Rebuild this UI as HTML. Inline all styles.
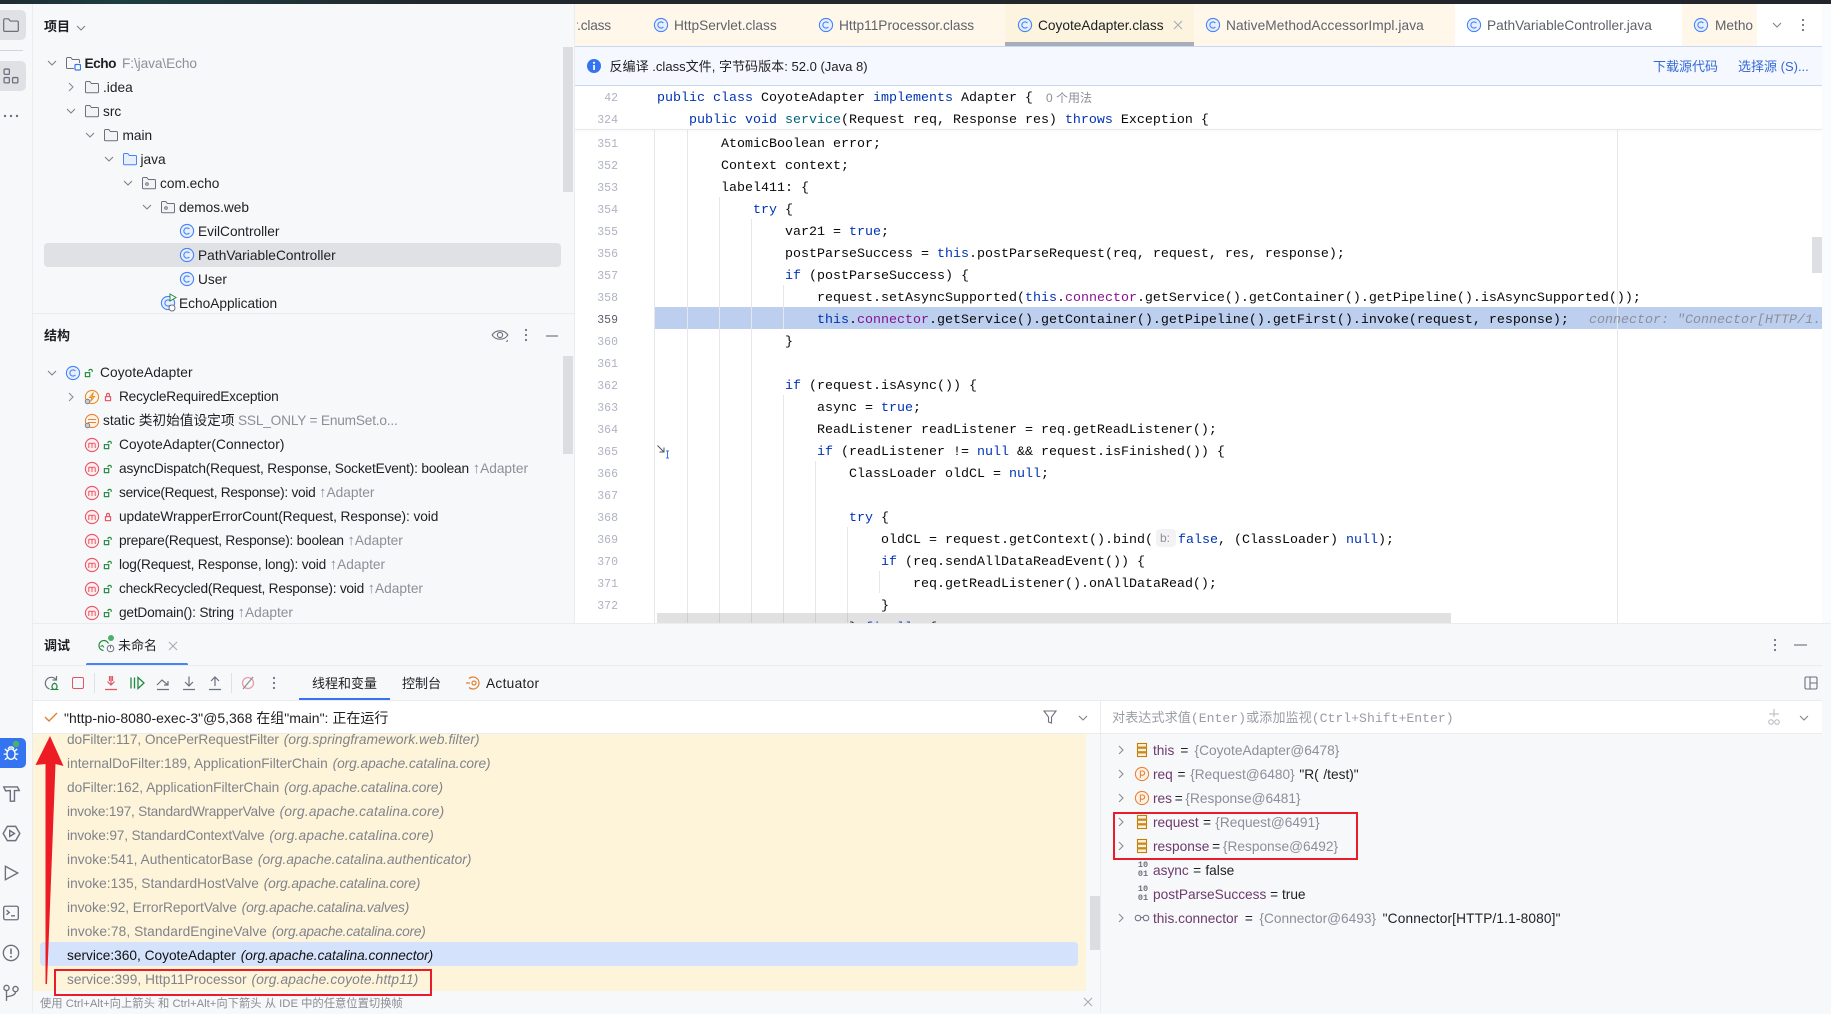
<!DOCTYPE html>
<html lang="zh">
<head>
<meta charset="utf-8">
<title>IDE Debug</title>
<style>
*{box-sizing:border-box}
html,body{margin:0;padding:0}
body{width:1831px;height:1012px;overflow:hidden;background:#f7f8fa;position:relative;font-family:"Liberation Sans","Noto Sans CJK SC",sans-serif;font-size:13.7px;color:#1e1f22}
.b{position:absolute}
.t{position:absolute;white-space:pre;line-height:20px;height:20px;margin-top:1px}
.g{color:#8c8f99;letter-spacing:0}
.g b{font-weight:normal;font-size:15px;line-height:10px}
.i{position:absolute;width:16px;height:16px;overflow:visible;margin-top:1px}
.c{position:absolute;white-space:pre;line-height:20px;height:20px;font-family:"Liberation Mono",monospace;font-size:13.33px;color:#080808;margin-top:4px}
.n{position:absolute;left:570px;width:48px;text-align:right;line-height:20px;height:20px;font-family:"Liberation Mono",monospace;font-size:11.5px;color:#aeb3c2;margin-top:4px}
.k{color:#0033b3}.f{color:#871094}.m{color:#00627a}
.tab{color:#5f626b}
.st{position:absolute;left:34px;white-space:pre;line-height:20px;height:20px;color:#80838a;margin-top:2px}
.st i{margin-left:1px}
.v{color:#6d3a6a}
.vg{color:#8c8f99}
.gl{position:absolute;width:1px;background:#e6e7eb}
.bi{position:absolute;left:1137px;width:12px;font:bold 8.5px/9px "Liberation Mono",monospace;color:#6c707e;text-align:center}
</style>
</head>
<body>
<svg width="0" height="0" style="position:absolute">
<defs>
<symbol id="c" viewBox="0 0 16 16"><circle cx="8" cy="8" r="6.6" fill="#e7effd" stroke="#4682fa" stroke-width="1.1"/><path d="M10.4 6.1A3.1 3.1 0 1 0 10.4 9.9" fill="none" stroke="#4682fa" stroke-width="1.1"/></symbol>
<symbol id="m" viewBox="0 0 16 16"><circle cx="8" cy="8" r="6.6" fill="#fdeef0" stroke="#e55765" stroke-width="1.1"/><path d="M4.8 11V6M4.8 7c.5-1.1 2.6-1.1 3.2 0v4M8 7c.5-1.1 2.6-1.1 3.2 0v4" fill="none" stroke="#e55765" stroke-width="1"/></symbol>
<symbol id="p" viewBox="0 0 16 16"><circle cx="8" cy="8" r="6.6" fill="#fff3e8" stroke="#e8833a" stroke-width="1.1"/><path d="M6.4 12V5h2.2a2.1 2.1 0 0 1 0 4.2H6.4" fill="none" stroke="#e8833a" stroke-width="1.1"/></symbol>
<symbol id="fd" viewBox="0 0 16 16"><path d="M1.5 3.5a1 1 0 0 1 1-1h3.3l1.6 2h6.1a1 1 0 0 1 1 1v7.2a1 1 0 0 1-1 1h-11a1 1 0 0 1-1-1z" fill="#f2f3f5" stroke="#6c707e" stroke-width="1"/></symbol>
<symbol id="fj" viewBox="0 0 16 16"><path d="M1.5 3.5a1 1 0 0 1 1-1h3.3l1.6 2h6.1a1 1 0 0 1 1 1v7.2a1 1 0 0 1-1 1h-11a1 1 0 0 1-1-1z" fill="#e7effd" stroke="#4682fa" stroke-width="1"/></symbol>
<symbol id="fp" viewBox="0 0 16 16"><path d="M1.5 3.5a1 1 0 0 1 1-1h3.3l1.6 2h6.1a1 1 0 0 1 1 1v7.2a1 1 0 0 1-1 1h-11a1 1 0 0 1-1-1z" fill="#f2f3f5" stroke="#6c707e" stroke-width="1"/><circle cx="6" cy="9" r="1.3" fill="none" stroke="#6c707e"/></symbol>
<symbol id="fm" viewBox="0 0 16 16"><path d="M9 13.5H2.5a1 1 0 0 1-1-1v-9a1 1 0 0 1 1-1h3.3l1.6 2h6.1a1 1 0 0 1 1 1V8" fill="#f7f8fa" stroke="#6c707e" stroke-width="1"/><rect x="10" y="9.5" width="5.5" height="5.5" rx="1" fill="#fff" stroke="#3574f0" stroke-width="1.2"/></symbol>
<symbol id="dn" viewBox="0 0 16 16"><path d="M4 6l4 4 4-4" fill="none" stroke="#7f8289" stroke-width="1.1"/></symbol>
<symbol id="rt" viewBox="0 0 16 16"><path d="M6 4l4 4-4 4" fill="none" stroke="#8a8d94" stroke-width="1.1"/></symbol>
<symbol id="lo" viewBox="-3 -3 22 22"><rect x="3" y="7.5" width="6" height="5.5" fill="none" stroke="#208a3c" stroke-width="1.6"/><path d="M8 5.5V4.5a2.3 2.3 0 0 1 4.4 0V6.5" fill="none" stroke="#208a3c" stroke-width="1.6"/></symbol>
<symbol id="lc" viewBox="-3 -3 22 22"><rect x="4.5" y="7.5" width="7" height="5.5" fill="none" stroke="#e55765" stroke-width="1.6"/><path d="M6 7.5V5a2 2 0 0 1 4 0v2.5" fill="none" stroke="#e55765" stroke-width="1.6"/></symbol>
<symbol id="fs" viewBox="0 0 16 16"><g fill="#fdf3dc" stroke="#c47e08" stroke-width="1.1"><rect x="3.5" y="1.5" width="9" height="3.6"/><rect x="3.5" y="6.2" width="9" height="3.6"/><rect x="3.5" y="10.9" width="9" height="3.6"/></g></symbol>
<symbol id="x" viewBox="0 0 16 16"><path d="M4 4l8 8M12 4l-8 8" stroke="#a8abb3" stroke-width="1.1" fill="none"/></symbol>
<symbol id="ke" viewBox="0 0 16 16"><g fill="#6c707e"><circle cx="8" cy="3" r="1.1"/><circle cx="8" cy="8" r="1.1"/><circle cx="8" cy="13" r="1.1"/></g></symbol>
</defs>
</svg>

<!-- top strip -->
<div class="b" style="left:0;top:0;width:1831px;height:4px;background:linear-gradient(90deg,#1f2b30 0,#1d3f3f 120px,#21282d 420px,#22252b 100%)"></div>

<!-- left toolbar -->
<div class="b" style="left:32px;top:4px;width:1px;height:1008px;background:#ebecf0"></div>
<div class="b" style="left:0;top:10px;width:26px;height:30px;background:#dfe1e5;border-radius:0 5px 5px 0"></div>
<svg class="i" style="left:2px;top:15px;width:18px;height:18px" viewBox="0 0 16 16"><path d="M1.5 3.5a1 1 0 0 1 1-1h3.3l1.6 2h6.1a1 1 0 0 1 1 1v7.2a1 1 0 0 1-1 1h-11a1 1 0 0 1-1-1z" fill="none" stroke="#6c707e" stroke-width="1.1"/></svg>
<div class="b" style="left:0;top:50px;width:23px;height:1px;background:#d3d5db"></div>
<div class="b" style="left:0;top:61px;width:26px;height:30px;background:#dfe1e5;border-radius:0 5px 5px 0"></div>
<svg class="i" style="left:3px;top:67px;width:17px;height:17px" viewBox="0 0 16 16"><g fill="none" stroke="#6c707e" stroke-width="1.2"><rect x="1" y="1" width="5" height="5" rx="1"/><rect x="1" y="9" width="5" height="5" rx="1"/><rect x="9" y="9" width="5" height="5" rx="1"/></g></svg>
<svg class="i" style="left:3px;top:107px" viewBox="0 0 16 16"><g fill="#6c707e"><circle cx="2" cy="8" r="1.2"/><circle cx="8" cy="8" r="1.2"/><circle cx="14" cy="8" r="1.2"/></g></svg>

<div class="b" style="left:0;top:738px;width:26px;height:30px;background:#3574f0;border-radius:0 5px 5px 0"></div>
<svg class="i" style="left:2px;top:743px;width:18px;height:18px" viewBox="0 0 16 16"><g fill="none" stroke="#fff" stroke-width="1.2"><ellipse cx="8" cy="9" rx="3.6" ry="4.6"/><path d="M5.5 4.5a2.6 2.6 0 0 1 5 0M1.5 9h3M11.5 9h3M2.5 4.5l2.5 2M13.5 4.5l-2.500 2M2.5 14l2.5-2M13.5 14l-2.5-2"/></g></svg>
<svg class="i" style="left:12px;top:739px;width:8px;height:8px" viewBox="0 0 8 8"><circle cx="4" cy="4" r="3.2" fill="#4caf6a"/></svg>
<svg class="i" style="left:2px;top:783px;width:19px;height:19px" viewBox="0 0 16 16"><path d="M1.5 2.5H13l1.5 3H10.5V14.5H7V5.5L3 5.8z" fill="none" stroke="#6c707e" stroke-width="1.2"/></svg>
<svg class="i" style="left:2px;top:823px;width:19px;height:19px" viewBox="0 0 16 16"><path d="M4.5 2h7l3.5 6-3.5 6h-7L1 8z" fill="none" stroke="#6c707e" stroke-width="1.2"/><path d="M6.5 5.500l4 2.500-4 2.500z" fill="none" stroke="#6c707e" stroke-width="1.2"/></svg>
<svg class="i" style="left:2px;top:863px;width:18px;height:18px" viewBox="0 0 16 16"><path d="M3 2l11 6-11 6z" fill="none" stroke="#6c707e" stroke-width="1.2"/></svg>
<svg class="i" style="left:2px;top:903px;width:18px;height:18px" viewBox="0 0 16 16"><rect x="1.5" y="2" width="13" height="12" rx="1.5" fill="none" stroke="#6c707e" stroke-width="1.2"/><path d="M4 5.5l2.500 2L4 9.500M8 10.500h3.500" fill="none" stroke="#6c707e" stroke-width="1.2"/></svg>
<svg class="i" style="left:2px;top:943px;width:18px;height:18px" viewBox="0 0 16 16"><circle cx="8" cy="8" r="6.8" fill="none" stroke="#6c707e" stroke-width="1.2"/><path d="M8 4v5" stroke="#6c707e" stroke-width="1.4"/><circle cx="8" cy="11.3" r=".9" fill="#6c707e"/></svg>
<svg class="i" style="left:2px;top:983px;width:18px;height:18px" viewBox="0 0 16 16"><g fill="none" stroke="#6c707e" stroke-width="1.2"><circle cx="4" cy="3.5" r="2.3"/><circle cx="12" cy="4.5" r="2.3"/><path d="M4 6v9M12 7c0 3-4 3.5-8 4.500"/></g></svg>

<!-- project panel -->
<div class="t" style="left:44px;top:16px;font-weight:bold;font-size:13px">项目</div>
<svg class="i" style="left:73px;top:19px"><use href="#dn"/></svg>
<div class="b" style="left:563px;top:47px;width:10px;height:145px;background:#dcdde0"></div>
<div class="b" style="left:44px;top:243px;width:517px;height:24px;background:#dfe1e5;border-radius:4px"></div>

<svg class="i" style="left:44px;top:54px"><use href="#dn"/></svg>
<svg class="i" style="left:65px;top:54px"><use href="#fm"/></svg>
<div class="t" style="left:84.5px;top:53px;font-weight:bold;letter-spacing:-.5px">Echo</div>
<div class="t g" style="left:122px;top:53px;letter-spacing:-.1px">F:\java\Echo</div>

<svg class="i" style="left:63px;top:78px"><use href="#rt"/></svg>
<svg class="i" style="left:84px;top:78px"><use href="#fd"/></svg>
<div class="t" style="left:103px;top:77px">.idea</div>

<svg class="i" style="left:63px;top:102px"><use href="#dn"/></svg>
<svg class="i" style="left:84px;top:102px"><use href="#fd"/></svg>
<div class="t" style="left:103px;top:101px">src</div>

<svg class="i" style="left:82px;top:126px"><use href="#dn"/></svg>
<svg class="i" style="left:103px;top:126px"><use href="#fd"/></svg>
<div class="t" style="left:122.5px;top:125px">main</div>

<svg class="i" style="left:101px;top:150px"><use href="#dn"/></svg>
<svg class="i" style="left:122px;top:150px"><use href="#fj"/></svg>
<div class="t" style="left:140.5px;top:149px">java</div>

<svg class="i" style="left:120px;top:174px"><use href="#dn"/></svg>
<svg class="i" style="left:141px;top:174px"><use href="#fp"/></svg>
<div class="t" style="left:160px;top:173px">com.echo</div>

<svg class="i" style="left:139px;top:198px"><use href="#dn"/></svg>
<svg class="i" style="left:160px;top:198px"><use href="#fp"/></svg>
<div class="t" style="left:179px;top:197px">demos.web</div>

<svg class="i" style="left:179px;top:222px"><use href="#c"/></svg>
<div class="t" style="left:198px;top:221px">EvilController</div>
<svg class="i" style="left:179px;top:246px"><use href="#c"/></svg>
<div class="t" style="left:198px;top:245px;letter-spacing:.05px">PathVariableController</div>
<svg class="i" style="left:179px;top:270px"><use href="#c"/></svg>
<div class="t" style="left:198px;top:269px">User</div>
<svg class="i" style="left:160px;top:294px"><use href="#c"/></svg>
<svg class="i" style="left:169px;top:292px;width:9px;height:9px" viewBox="0 0 9 9"><path d="M1 1l6 3.5-6 3.5z" fill="#fff" stroke="#208a3c"/></svg>
<svg class="i" style="left:168px;top:303px;width:8px;height:8px" viewBox="0 0 8 8"><circle cx="4" cy="4" r="3" fill="#fff" stroke="#6c707e"/></svg>
<div class="t" style="left:179px;top:293px">EchoApplication</div>

<div class="b" style="left:32px;top:313px;width:542px;height:1px;background:#ebecf0"></div>

<!-- structure panel -->
<div class="t" style="left:44px;top:325px;font-weight:bold;font-size:13px">结构</div>
<svg class="i" style="left:491px;top:325px;width:18px;height:18px" viewBox="0 0 16 16"><path d="M1 8c3-5 11-5 14 0-3 5-11 5-14 0z" fill="none" stroke="#6c707e"/><circle cx="8" cy="8" r="2.3" fill="none" stroke="#6c707e"/><path d="M13 14h2v-2z" fill="#6c707e"/></svg>
<svg class="i" style="left:518px;top:326px"><use href="#ke"/></svg>
<div class="b" style="left:546px;top:335px;width:12px;height:1.5px;background:#a8abb3"></div>
<div class="b" style="left:563px;top:356px;width:10px;height:98px;background:#dcdde0"></div>

<div class="b" style="left:0;top:1px;width:0;height:0">
<svg class="i" style="left:44px;top:363px"><use href="#dn"/></svg>
<svg class="i" style="left:65px;top:363px"><use href="#c"/></svg>
<svg class="i" style="left:81px;top:363px"><use href="#lo"/></svg>
<div class="t" style="left:100px;top:361px;letter-spacing:.1px">CoyoteAdapter</div>

<svg class="i" style="left:63px;top:387px"><use href="#rt"/></svg>
<svg class="i" style="left:84px;top:387px" viewBox="0 0 16 16"><circle cx="8" cy="8" r="6.6" fill="#fff3e8" stroke="#e0912f" stroke-width="1.1"/><path d="M9.5 3.5L5.5 8.5H8L6.5 12.5l4-5H8z" fill="none" stroke="#e0912f"/><circle cx="3.5" cy="12.5" r="2.3" fill="#c9ccd6" stroke="#6c707e" stroke-width=".8"/></svg>
<svg class="i" style="left:100px;top:387px"><use href="#lc"/></svg>
<div class="t" style="left:119px;top:385px;letter-spacing:-.2px">RecycleRequiredException</div>

<svg class="i" style="left:84px;top:411px" viewBox="0 0 16 16"><circle cx="8" cy="8" r="6.6" fill="#fff3e8" stroke="#e8833a" stroke-width="1.1"/><path d="M4 6.5h8M4 9.5h8" stroke="#e8833a"/><circle cx="3.5" cy="12.5" r="2.3" fill="#c9ccd6" stroke="#6c707e" stroke-width=".8"/></svg>
<div class="t" style="left:103px;top:409px">static 类初始值设定项</div>
<div class="t g" style="left:238px;top:409px;letter-spacing:-.2px">SSL_ONLY = EnumSet.o...</div>

<svg class="i" style="left:84px;top:435px"><use href="#m"/></svg>
<svg class="i" style="left:100px;top:435px"><use href="#lo"/></svg>
<div class="t" style="left:119px;top:433px;letter-spacing:.08px">CoyoteAdapter(Connector)</div>

<svg class="i" style="left:84px;top:459px"><use href="#m"/></svg>
<svg class="i" style="left:100px;top:459px"><use href="#lo"/></svg>
<div class="t" style="left:119px;top:457px;letter-spacing:-.17px">asyncDispatch(Request, Response, SocketEvent): boolean <span class="g"><b>↑</b>Adapter</span></div>

<svg class="i" style="left:84px;top:483px"><use href="#m"/></svg>
<svg class="i" style="left:100px;top:483px"><use href="#lo"/></svg>
<div class="t" style="left:119px;top:481px;letter-spacing:-.28px">service(Request, Response): void <span class="g"><b>↑</b>Adapter</span></div>

<svg class="i" style="left:84px;top:507px"><use href="#m"/></svg>
<svg class="i" style="left:100px;top:507px"><use href="#lc"/></svg>
<div class="t" style="left:119px;top:505px;letter-spacing:-.08px">updateWrapperErrorCount(Request, Response): void</div>

<svg class="i" style="left:84px;top:531px"><use href="#m"/></svg>
<svg class="i" style="left:100px;top:531px"><use href="#lo"/></svg>
<div class="t" style="left:119px;top:529px;letter-spacing:-.23px">prepare(Request, Response): boolean <span class="g"><b>↑</b>Adapter</span></div>

<svg class="i" style="left:84px;top:555px"><use href="#m"/></svg>
<svg class="i" style="left:100px;top:555px"><use href="#lo"/></svg>
<div class="t" style="left:119px;top:553px;letter-spacing:-.2px">log(Request, Response, long): void <span class="g"><b>↑</b>Adapter</span></div>

<svg class="i" style="left:84px;top:579px"><use href="#m"/></svg>
<svg class="i" style="left:100px;top:579px"><use href="#lo"/></svg>
<div class="t" style="left:119px;top:577px;letter-spacing:-.24px">checkRecycled(Request, Response): void <span class="g"><b>↑</b>Adapter</span></div>

<svg class="i" style="left:84px;top:603px"><use href="#m"/></svg>
<svg class="i" style="left:100px;top:603px"><use href="#lo"/></svg>
<div class="t" style="left:119px;top:601px;letter-spacing:-.2px">getDomain(): String <span class="g"><b>↑</b>Adapter</span></div>
</div>

<!-- editor -->
<div class="b" style="left:574px;top:4px;width:1248px;height:620px;background:#fff;overflow:hidden"></div>
<div class="b" style="left:574px;top:4px;width:1px;height:619px;background:#ebecf0"></div>
<div class="b" style="left:1822px;top:4px;width:9px;height:619px;background:#fafbfc"></div>

<!-- tabs -->
<div class="b" style="left:575px;top:4px;width:880px;height:42px;background:#fff8ea"></div>
<div class="b" style="left:1682px;top:4px;width:75px;height:42px;background:#fff8ea"></div>
<div class="b" style="left:1005px;top:4px;width:189px;height:38px;background:#fdf4e0"></div>
<div class="b" style="left:1005px;top:42px;width:189px;height:4px;background:#a9adbb"></div>
<div class="b" style="left:575px;top:46px;width:1247px;height:1px;background:#c9d7f1"></div>
<div class="b" style="left:577px;top:15px;width:40px;height:22px;overflow:hidden"><div class="t tab" style="left:-3.5px;top:0;letter-spacing:-.2px">r.class</div></div>
<svg class="i" style="left:653px;top:16px"><use href="#c"/></svg>
<div class="t tab" style="left:674px;top:15px">HttpServlet.class</div>
<svg class="i" style="left:818px;top:16px"><use href="#c"/></svg>
<div class="t tab" style="left:839px;top:15px">Http11Processor.class</div>
<svg class="i" style="left:1017px;top:16px"><use href="#c"/></svg>
<div class="t" style="left:1038px;top:15px">CoyoteAdapter.class</div>
<svg class="i" style="left:1170px;top:16px"><use href="#x"/></svg>
<svg class="i" style="left:1205px;top:16px"><use href="#c"/></svg>
<div class="t tab" style="left:1226px;top:15px;letter-spacing:.08px">NativeMethodAccessorImpl.java</div>
<svg class="i" style="left:1466px;top:16px"><use href="#c"/></svg>
<div class="t tab" style="left:1487px;top:15px">PathVariableController.java</div>
<svg class="i" style="left:1693px;top:16px"><use href="#c"/></svg>
<div class="b" style="left:1715px;top:15px;width:38px;height:22px;overflow:hidden"><div class="t tab" style="left:0;top:0">MethodHandle</div></div>
<svg class="i" style="left:1769px;top:16px"><use href="#dn"/></svg>
<svg class="i" style="left:1795px;top:16px"><use href="#ke"/></svg>

<!-- banner -->
<div class="b" style="left:575px;top:47px;width:1247px;height:39px;background:#f5f8fe;border-bottom:1px solid #c9d7f1"></div>
<svg class="i" style="left:586px;top:57px" viewBox="0 0 16 16"><circle cx="8" cy="8" r="7" fill="#3574f0"/><rect x="7.2" y="7" width="1.7" height="5" fill="#fff"/><circle cx="8" cy="4.8" r="1.1" fill="#fff"/></svg>
<div class="t" style="left:609.5px;top:56px;font-size:13.05px">反编译 .class文件, 字节码版本: 52.0 (Java 8)</div>
<div class="t" style="left:1653px;top:56px;color:#3369d6;font-size:13px">下载源代码</div>
<div class="t" style="left:1738px;top:56px;color:#3369d6;font-size:13px">选择源 (S)...</div>

<!-- code wrap -->
<div class="b" style="left:0;top:0;width:1822px;height:623px;overflow:hidden">
  <div class="b" style="left:654px;top:307px;width:1168px;height:22px;background:#bdcfef"></div>
  <div class="gl" style="left:654px;top:130px;height:493px"></div>
  <div class="gl" style="left:687px;top:130px;height:493px"></div>
  <div class="gl" style="left:719px;top:197px;height:426px"></div>
  <div class="gl" style="left:751px;top:219px;height:404px"></div>
  <div class="gl" style="left:783px;top:285px;height:44px"></div>
  <div class="gl" style="left:783px;top:395px;height:228px"></div>
  <div class="gl" style="left:815px;top:461px;height:162px"></div>
  <div class="gl" style="left:847px;top:527px;height:96px"></div>
  <div class="gl" style="left:879px;top:571px;height:22px"></div>
  <div class="gl" style="left:1617px;top:130px;height:493px"></div>

  <div class="n" style="top:85px">42</div>
  <div class="c" style="left:657px;top:85px"><span class="k">public class</span> CoyoteAdapter <span class="k">implements</span> Adapter {</div>
  <div class="t" style="left:1046px;top:87px;color:#8c8f99;font-size:12px">0 个用法</div>
  <div class="n" style="top:107px">324</div>
  <div class="c" style="left:689px;top:107px"><span class="k">public void</span> <span class="m">service</span>(Request req, Response res) <span class="k">throws</span> Exception {</div>
  <div class="b" style="left:575px;top:129px;width:1247px;height:1px;background:#e8e9ec;box-shadow:0 1px 3px rgba(0,0,0,.06)"></div>

  <div class="n" style="top:131px">351</div><div class="c" style="left:721px;top:131px">AtomicBoolean error;</div>
  <div class="n" style="top:153px">352</div><div class="c" style="left:721px;top:153px">Context context;</div>
  <div class="n" style="top:175px">353</div><div class="c" style="left:721px;top:175px">label411: {</div>
  <div class="n" style="top:197px">354</div><div class="c" style="left:753px;top:197px"><span class="k">try</span> {</div>
  <div class="n" style="top:219px">355</div><div class="c" style="left:785px;top:219px">var21 = <span class="k">true</span>;</div>
  <div class="n" style="top:241px">356</div><div class="c" style="left:785px;top:241px">postParseSuccess = <span class="k">this</span>.postParseRequest(req, request, res, response);</div>
  <div class="n" style="top:263px">357</div><div class="c" style="left:785px;top:263px"><span class="k">if</span> (postParseSuccess) {</div>
  <div class="n" style="top:285px">358</div><div class="c" style="left:817px;top:285px">request.setAsyncSupported(<span class="k">this</span>.<span class="f">connector</span>.getService().getContainer().getPipeline().isAsyncSupported());</div>
  <div class="n" style="top:307px;color:#5a5d6b">359</div><div class="c" style="left:817px;top:307px"><span class="k">this</span>.<span class="f">connector</span>.getService().getContainer().getPipeline().getFirst().invoke(request, response);</div>
  <div class="c" style="left:1589px;top:307px;color:#8c8f99;font-style:italic">connector: "Connector[HTTP/1.1-8080]"</div>
  <div class="n" style="top:329px">360</div><div class="c" style="left:785px;top:329px">}</div>
  <div class="n" style="top:351px">361</div>
  <div class="n" style="top:373px">362</div><div class="c" style="left:785px;top:373px"><span class="k">if</span> (request.isAsync()) {</div>
  <div class="n" style="top:395px">363</div><div class="c" style="left:817px;top:395px">async = <span class="k">true</span>;</div>
  <div class="n" style="top:417px">364</div><div class="c" style="left:817px;top:417px">ReadListener readListener = req.getReadListener();</div>
  <div class="n" style="top:439px">365</div><div class="c" style="left:817px;top:439px"><span class="k">if</span> (readListener != <span class="k">null</span> &amp;&amp; request.isFinished()) {</div>
  <div class="n" style="top:461px">366</div><div class="c" style="left:849px;top:461px">ClassLoader oldCL = <span class="k">null</span>;</div>
  <div class="n" style="top:483px">367</div>
  <div class="n" style="top:505px">368</div><div class="c" style="left:849px;top:505px"><span class="k">try</span> {</div>
  <div class="n" style="top:527px">369</div><div class="c" style="left:881px;top:527px">oldCL = request.getContext().bind(</div>
  <div class="b" style="left:1156px;top:529px;width:20px;height:18px;background:#f3f3f4;border-radius:4px"></div>
  <div class="t" style="left:1160px;top:527px;color:#8c8f99;font-size:12px">b:</div>
  <div class="c" style="left:1178px;top:527px"><span class="k">false</span>, (ClassLoader) <span class="k">null</span>);</div>
  <div class="n" style="top:549px">370</div><div class="c" style="left:881px;top:549px"><span class="k">if</span> (req.sendAllDataReadEvent()) {</div>
  <div class="n" style="top:571px">371</div><div class="c" style="left:913px;top:571px">req.getReadListener().onAllDataRead();</div>
  <div class="n" style="top:593px">372</div><div class="c" style="left:881px;top:593px">}</div>
  <div class="n" style="top:615px">373</div><div class="c" style="left:849px;top:615px">} <span class="k">finally</span> {</div>

  <svg class="i" style="left:656px;top:443px" viewBox="0 0 16 16"><path d="M1.5 1.5l6.5 6.5M8 3.5V8H3.5" fill="none" stroke="#4d5563"/><path d="M10 7h3M11.5 7v7M10 14h3" fill="none" stroke="#3574f0"/></svg>

  <div class="b" style="left:657px;top:613px;width:794px;height:10px;background:rgba(120,120,120,.22)"></div>
  <div class="b" style="left:1812px;top:237px;width:10px;height:36px;background:#dedfe2"></div>
</div>

<!-- debug panel -->
<div class="b" style="left:32px;top:623px;width:1799px;height:1px;background:#ebecf0"></div>
<div class="t" style="left:44px;top:635px;font-weight:bold;font-size:13px">调试</div>
<svg class="i" style="left:99px;top:636px" viewBox="0 0 16 16"><path d="M9.5 6.5a5 5 0 1 0-5 7" fill="none" stroke="#208a3c" stroke-width="1.2"/><path d="M1.5 9.5l2-1 1.5 2" fill="none" stroke="#208a3c"/><circle cx="11.5" cy="11.5" r="3.3" fill="#f7f8fa" stroke="#6c707e"/><path d="M11.5 9v2.5" stroke="#6c707e"/></svg>
<svg class="i" style="left:107px;top:633px;width:8px;height:8px" viewBox="0 0 8 8"><circle cx="4" cy="4" r="3" fill="#4caf6a"/></svg>
<div class="t" style="left:118px;top:635px;font-size:13px">未命名</div>
<svg class="i" style="left:165px;top:637px"><use href="#x"/></svg>
<div class="b" style="left:86px;top:663px;width:102px;height:3px;background:#4682fa;border-radius:2px"></div>
<div class="b" style="left:32px;top:665px;width:1790px;height:1px;background:#ebecf0"></div>
<svg class="i" style="left:1767px;top:636px"><use href="#ke"/></svg>
<div class="b" style="left:1794px;top:644px;width:13px;height:1.5px;background:#a8abb3"></div>

<!-- toolbar -->
<svg class="i" style="left:44px;top:674px" viewBox="0 0 16 16"><path d="M12 4.5A6 6 0 1 0 5.5 14" fill="none" stroke="#6c707e" stroke-width="1.2"/><path d="M12.5 1v4h-4" fill="none" stroke="#6c707e" stroke-width="1.2"/><ellipse cx="10.5" cy="11.5" rx="2.5" ry="3" fill="none" stroke="#208a3c" stroke-width="1.2"/><path d="M6.5 14.5h8M10.5 7.5v1" stroke="#208a3c"/></svg>
<div class="b" style="left:72px;top:677px;width:12px;height:12px;border:1.3px solid #e05561;border-radius:2px"></div>
<div class="b" style="left:94px;top:673px;width:1px;height:20px;background:#dfe1e5"></div>
<svg class="i" style="left:103px;top:674px" viewBox="0 0 16 16"><path d="M8 1v9M4.5 6.5L8 10l3.5-3.5M6.5 1v5M9.5 1v5M2 14.5h12" fill="none" stroke="#e05561" stroke-width="1.2"/></svg>
<svg class="i" style="left:129px;top:674px" viewBox="0 0 16 16"><path d="M2 2.5v11M5.5 2.5v11M9 2.5l6 5.5-6 5.5z" fill="none" stroke="#208a3c" stroke-width="1.3"/></svg>
<svg class="i" style="left:155px;top:674px" viewBox="0 0 16 16"><path d="M2 10l5-5 6 5M13 6v4H9M2 14.5h12" fill="none" stroke="#6c707e" stroke-width="1.2"/></svg>
<svg class="i" style="left:181px;top:674px" viewBox="0 0 16 16"><path d="M8 1.5v9M4 7l4 4 4-4M2 14.5h12" fill="none" stroke="#6c707e" stroke-width="1.2"/></svg>
<svg class="i" style="left:207px;top:674px" viewBox="0 0 16 16"><path d="M8 11V2M4 6l4-4 4 4M2 14.5h12" fill="none" stroke="#6c707e" stroke-width="1.2"/></svg>
<div class="b" style="left:231px;top:673px;width:1px;height:20px;background:#dfe1e5"></div>
<svg class="i" style="left:240px;top:674px" viewBox="0 0 16 16"><circle cx="8" cy="8" r="5.5" fill="none" stroke="#e8a0a8" stroke-width="1.3"/><path d="M3 14L13 2" stroke="#8a8d94" stroke-width="1.2"/></svg>
<svg class="i" style="left:266px;top:674px"><use href="#ke"/></svg>
<div class="t" style="left:312px;top:673px;font-size:13px">线程和变量</div>
<div class="b" style="left:299px;top:698px;width:91px;height:3px;background:#3574f0"></div>
<div class="t" style="left:402px;top:673px;font-size:13px">控制台</div>
<svg class="i" style="left:465px;top:674px" viewBox="0 0 16 16"><path d="M8 2a6 6 0 1 1 0 12M8 2a6 6 0 0 0-4 1.5M8 14a6 6 0 0 1-4-1.5M1 8h4" fill="none" stroke="#e0812f" stroke-width="1.2"/><circle cx="9" cy="8" r="2" fill="none" stroke="#e0812f" stroke-width="1.2"/></svg>
<div class="t" style="left:486px;top:673px;letter-spacing:.3px">Actuator</div>
<svg class="i" style="left:1803px;top:674px" viewBox="0 0 16 16"><rect x="2" y="2" width="12" height="12" rx="1.5" fill="none" stroke="#6c707e" stroke-width="1.1"/><path d="M7 2v12M7 8h7" stroke="#6c707e" stroke-width="1.1"/></svg>

<!-- white row -->
<div class="b" style="left:33px;top:700px;width:1789px;height:34px;background:#fff;border-top:1px solid #ebecf0;border-bottom:1px solid #ebecf0"></div>
<svg class="i" style="left:43px;top:708px" viewBox="0 0 16 16"><path d="M2 8l4 4 8-8" fill="none" stroke="#e0812f" stroke-width="1.4"/></svg>
<div class="t" style="left:64px;top:707px;font-size:14px">"http-nio-8080-exec-3"@5,368 在组"main": 正在运行</div>
<svg class="i" style="left:1042px;top:708px" viewBox="0 0 16 16"><path d="M2 2h12L9.5 8v6l-3-1V8z" fill="none" stroke="#6c707e" stroke-width="1.1"/></svg>
<svg class="i" style="left:1075px;top:709px"><use href="#dn"/></svg>
<div class="t" style="left:1112px;top:708px;font-family:'Liberation Mono','Noto Sans CJK SC',monospace;font-size:13.15px;color:#9a9da6">对表达式求值(Enter)或添加监视(Ctrl+Shift+Enter)</div>
<svg class="i" style="left:1766px;top:708px" viewBox="0 0 16 16"><path d="M8 0v8M3 5h10" stroke="#b5b7bd" fill="none"/><circle cx="5" cy="13" r="2.3" fill="none" stroke="#b5b7bd"/><circle cx="11" cy="13" r="2.3" fill="none" stroke="#b5b7bd"/></svg>
<svg class="i" style="left:1796px;top:709px"><use href="#dn"/></svg>

<!-- frames -->
<div class="b" style="left:33px;top:734px;width:1053px;height:257px;background:#fef4da;overflow:hidden">
  <div class="b" style="left:7px;top:208px;width:1038px;height:24px;background:#d4e2fc;border-radius:4px"></div>
  <div class="st" style="top:-6px"><span style="letter-spacing:-.07px">doFilter:117, OncePerRequestFilter</span> <i style="letter-spacing:.11px">(org.springframework.web.filter)</i></div>
  <div class="st" style="top:18px"><span style="letter-spacing:.03px">internalDoFilter:189, ApplicationFilterChain</span> <i style="letter-spacing:-.04px">(org.apache.catalina.core)</i></div>
  <div class="st" style="top:42px">doFilter:162, ApplicationFilterChain <i>(org.apache.catalina.core)</i></div>
  <div class="st" style="top:66px"><span style="letter-spacing:-.22px">invoke:197, StandardWrapperValve</span> <i style="letter-spacing:.22px">(org.apache.catalina.core)</i></div>
  <div class="st" style="top:90px"><span style="letter-spacing:-.15px">invoke:97, StandardContextValve</span> <i style="letter-spacing:.22px">(org.apache.catalina.core)</i></div>
  <div class="st" style="top:114px"><span style="letter-spacing:.04px">invoke:541, AuthenticatorBase</span> <i style="letter-spacing:.06px">(org.apache.catalina.authenticator)</i></div>
  <div class="st" style="top:138px"><span style="letter-spacing:.04px">invoke:135, StandardHostValve</span> <i style="letter-spacing:-.09px">(org.apache.catalina.core)</i></div>
  <div class="st" style="top:162px"><span style="letter-spacing:-.04px">invoke:92, ErrorReportValve</span> <i style="letter-spacing:-.13px">(org.apache.catalina.valves)</i></div>
  <div class="st" style="top:186px"><span style="letter-spacing:.08px">invoke:78, StandardEngineValve</span> <i style="letter-spacing:-.2px">(org.apache.catalina.core)</i></div>
  <div class="st" style="top:210px;color:#111">service:360, CoyoteAdapter <i>(org.apache.catalina.connector)</i></div>
  <div class="st" style="top:234px"><span style="letter-spacing:.04px">service:399, Http11Processor</span> <i style="letter-spacing:.17px">(org.apache.coyote.http11)</i></div>
</div>
<div class="b" style="left:1090px;top:896px;width:10px;height:54px;background:#dcdde0"></div>
<div class="b" style="left:1100px;top:701px;width:1px;height:311px;background:#ebecf0"></div>
<div class="t" style="left:40px;top:993px;font-size:11.3px;color:#8a8d94">使用 Ctrl+Alt+向上箭头 和 Ctrl+Alt+向下箭头 从 IDE 中的任意位置切换帧</div>
<svg class="i" style="left:1080px;top:993px"><use href="#x"/></svg>

<!-- variables -->
<svg class="i" style="left:1113px;top:741px"><use href="#rt"/></svg>
<svg class="i" style="left:1134px;top:741px"><use href="#fs"/></svg>
<div class="t" style="left:1153px;top:740px;word-spacing:2.3px"><span class="v">this</span> = <span class="vg">{CoyoteAdapter@6478}</span></div>

<svg class="i" style="left:1113px;top:765px"><use href="#rt"/></svg>
<svg class="i" style="left:1134px;top:765px"><use href="#p"/></svg>
<div class="t" style="left:1153px;top:764px;word-spacing:.9px"><span class="v">req</span> = <span class="vg">{Request@6480}</span> "R( /test)"</div>

<svg class="i" style="left:1113px;top:789px"><use href="#rt"/></svg>
<svg class="i" style="left:1134px;top:789px"><use href="#p"/></svg>
<div class="t" style="left:1153px;top:788px;word-spacing:-1.1px"><span class="v">res</span> = <span class="vg">{Response@6481}</span></div>

<svg class="i" style="left:1113px;top:813px"><use href="#rt"/></svg>
<svg class="i" style="left:1134px;top:813px"><use href="#fs"/></svg>
<div class="t" style="left:1153px;top:812px;word-spacing:.5px"><span class="v">request</span> = <span class="vg">{Request@6491}</span></div>

<svg class="i" style="left:1113px;top:837px"><use href="#rt"/></svg>
<svg class="i" style="left:1134px;top:837px"><use href="#fs"/></svg>
<div class="t" style="left:1153px;top:836px;word-spacing:-1px"><span class="v">response</span> = <span class="vg">{Response@6492}</span></div>

<div class="bi" style="top:861px">10<br>01</div>
<div class="t" style="left:1153px;top:860px;word-spacing:.5px"><span class="v">async</span> = false</div>

<div class="bi" style="top:885px">10<br>01</div>
<div class="t" style="left:1153px;top:884px"><span class="v">postParseSuccess</span> = true</div>

<svg class="i" style="left:1113px;top:909px"><use href="#rt"/></svg>
<svg class="i" style="left:1134px;top:909px" viewBox="0 0 16 16"><circle cx="4" cy="8" r="2.8" fill="none" stroke="#6c707e"/><circle cx="12" cy="8" r="2.8" fill="none" stroke="#6c707e"/><path d="M6.8 7.5h2.4" stroke="#6c707e"/></svg>
<div class="t" style="left:1153px;top:908px;word-spacing:2.8px"><span class="v">this.connector</span> = <span class="vg">{Connector@6493}</span> <span style="letter-spacing:.15px">"Connector[HTTP/1.1-8080]"</span></div>

<!-- red annotations -->
<div class="b" style="left:1113px;top:812px;width:245px;height:48px;border:2px solid #e81c2a"></div>
<div class="b" style="left:54px;top:969px;width:378px;height:27px;border:2px solid #e81c2a"></div>
<svg class="b" style="left:0;top:0;pointer-events:none" width="100" height="1012" viewBox="0 0 100 1012"><path d="M50 736L63.5 766L55.5 764L47 984L45.5 984L45.5 764L35.5 765z" fill="#ed1c24"/></svg>
</body>
</html>
